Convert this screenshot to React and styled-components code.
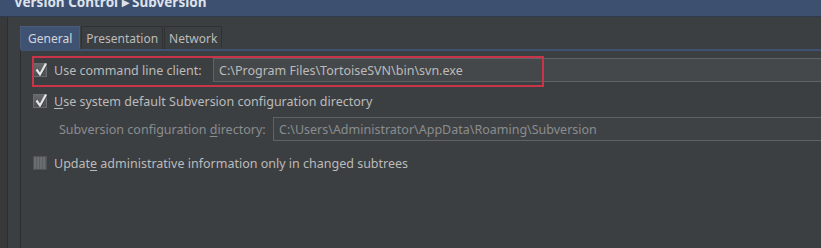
import React from 'react'
import styled, { createGlobalStyle } from 'styled-components'

const Global = createGlobalStyle`
  html, body {
    margin: 0;
    padding: 0;
    background: #3c3f41;
  }
  body {
    font-family: "Noto Sans", "Open Sans", sans-serif;
    font-size: 12px;
    color: #bbbbbb;
  }
`

const Page = styled.div`
  width: 821px;
  height: 248px;
  overflow: hidden;
  display: flex;
  flex-direction: column;
  background: #3c3f41;
`

const Header = styled.div`
  height: 16px;
  flex: none;
  background: #3e5070;
  border-bottom: 1px solid #2e3a4e;
  overflow: hidden;
  padding-left: 14px;
  span {
    display: block;
    margin-top: -8px;
    font-weight: 700;
    font-size: 13.5px;
    line-height: 20px;
    color: #dde2ea;
  }
`

const Body = styled.div`
  flex: 1;
  display: flex;
`

const Gutter = styled.div`
  width: 7px;
  flex: none;
  background: #37393b;
  border-right: 1px solid #2c2e2f;
`

const Main = styled.div`
  flex: 1;
  padding: 9px 0 0 12px;
  display: flex;
  flex-direction: column;
`

const TabBar = styled.div`
  display: flex;
  gap: 1px;
  height: 23px;
`

const Tab = styled.div`
  height: 23px;
  box-sizing: border-box;
  padding: 0 ${p => (p.active ? 7 : 4)}px;
  display: flex;
  align-items: center;
  font-size: 12px;
  color: ${p => (p.active ? '#d2d6dc' : '#bbbbbb')};
  background: ${p => (p.active ? '#405272' : '#3c3f41')};
  border: 1px solid ${p => (p.active ? '#4a5c7c' : '#2f3133')};
  border-bottom: none;
`

const Pane = styled.div`
  flex: 1;
  border-left: 1px solid #2b2d2e;
  border-top: 2px solid #3f5271;
  padding: 6px 0 0 12px;
  display: flex;
  flex-direction: column;
`

const Row = styled.div`
  position: relative;
  display: flex;
  align-items: center;
  height: ${p => p.h || 24}px;
  margin-top: ${p => p.mt || 0}px;
  padding-left: ${p => p.indent || 0}px;
`

const Label = styled.label`
  display: flex;
  align-items: center;
  gap: 7px;
  width: ${p => (p.w ? `${p.w}px` : 'auto')};
  flex: none;
  color: ${p => (p.disabled ? '#8a8d90' : '#bbbbbb')};
  font-size: 12.5px;
  white-space: nowrap;
  u {
    text-decoration: underline;
    text-underline-offset: 2px;
  }
`

const Box = styled.span`
  position: relative;
  width: 14px;
  height: 14px;
  flex: none;
  box-sizing: border-box;
  border: 1px solid ${p => (p.checked ? '#6a6d70' : '#505254')};
  background: ${p =>
    p.checked
      ? 'linear-gradient(#65696c, #4c5053)'
      : 'repeating-linear-gradient(90deg, #6a6d70 0 2px, #5c5f62 2px 3px)'};
  svg {
    position: absolute;
    left: 0px;
    top: -3px;
  }
`

const Field = styled.div`
  flex: 1;
  height: 24px;
  box-sizing: border-box;
  border: 1px solid #606366;
  border-right: none;
  background: ${p => (p.disabled ? '#3f4244' : '#45484a')};
  color: ${p => (p.disabled ? '#8a8d90' : '#bbbbbb')};
  font-size: 12.5px;
  display: flex;
  align-items: center;
  padding-left: 5px;
  white-space: nowrap;
`

const Marker = styled.div`
  position: absolute;
  left: -1px;
  top: -1px;
  width: 512px;
  height: 31px;
  box-sizing: border-box;
  border: 2px solid #c93448;
  pointer-events: none;
`

const Check = ({ checked }) => (
  <Box checked={checked}>
    {checked && (
      <svg width="14" height="16" viewBox="0 0 14 16">
        <path d="M2.5 8.5 L6 13.5 L12 2.5" fill="none" stroke="#1e1e1e" strokeWidth="2.6" opacity="0.3" transform="translate(0.6 0.6)" />
        <path d="M2.5 8.5 L6 13.5 L12 2.5" fill="none" stroke="#e4e4e4" strokeWidth="2.2" />
      </svg>
    )}
  </Box>
)

const App = () => (
  <Page>
    <Global />
    <Header>
      <span>Version Control ▸ Subversion</span>
    </Header>
    <Body>
      <Gutter />
      <Main>
        <TabBar>
          <Tab active>General</Tab>
          <Tab>Presentation</Tab>
          <Tab>Network</Tab>
        </TabBar>
        <Pane>
          <Row h={26}>
            <Label w={180}>
              <Check checked />
              Use command line client:
            </Label>
            <Field>C:\Program Files\TortoiseSVN\bin\svn.exe</Field>
            <Marker />
          </Row>
          <Row h={20} mt={8}>
            <Label>
              <Check checked />
              <span><u>U</u>se system default Subversion configuration directory</span>
            </Label>
          </Row>
          <Row h={24} mt={6} indent={26}>
            <Label w={214} disabled>
              <span>Subversion configuration <u>d</u>irectory:</span>
            </Label>
            <Field disabled>C:\Users\Administrator\AppData\Roaming\Subversion</Field>
          </Row>
          <Row h={20} mt={12}>
            <Label>
              <Check />
              <span>Updat<u>e</u> administrative information only in changed subtrees</span>
            </Label>
          </Row>
        </Pane>
      </Main>
    </Body>
  </Page>
)

export default App
